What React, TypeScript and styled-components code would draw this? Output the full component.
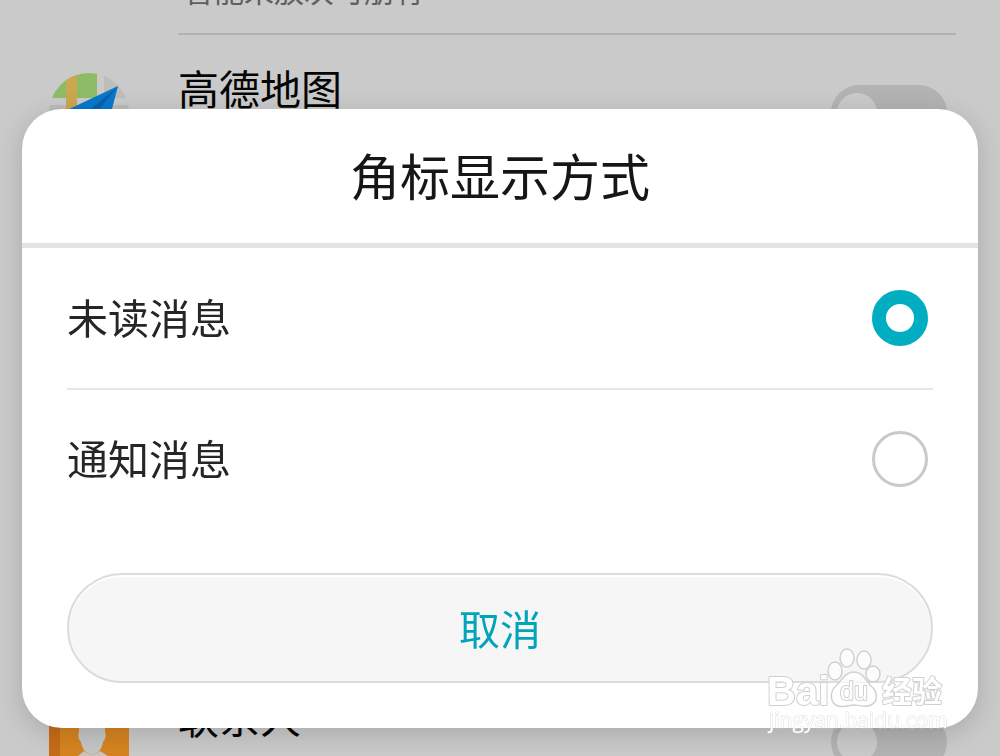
import React, { useState } from "react";
import styled, { createGlobalStyle } from "styled-components";

const GlobalStyle = createGlobalStyle`
  * { box-sizing: border-box; }
  body {
    margin: 0;
    background: #cacaca;
    font-family: "Noto Sans CJK SC", "Noto Sans", sans-serif;
  }
`;

const Page = styled.main`
  display: flex;
  flex-direction: column;
  justify-content: space-between;
  height: 100vh;
  overflow: hidden;
  background: #cacaca;
`;

const Summary = styled.p`
  display: flex;
  align-items: flex-end;
  height: 33px;
  margin: 0 44px 0 184px;
  padding-bottom: 26px;
  font-size: 30px;
  line-height: 36px;
  color: #5f5f5f;
`;

const AppRow = styled.label`
  display: flex;
  align-items: flex-start;
  height: 92px;
  padding: 38px 53px 0 49px;
`;

const AppIcon = styled.svg`
  flex: none;
  width: 80px;
  height: 80px;
  margin-right: 49px;
`;

const AppBody = styled.div`
  flex: 1;
  font-size: 41px;
  line-height: 28px;
  color: #050505;
`;

const Switch = styled.input`
  appearance: none;
  flex: none;
  display: flex;
  align-items: center;
  width: 116px;
  height: 56px;
  margin: 12px 0 0;
  padding: 0 6px;
  border-radius: 28px;
  background: #b3b3b3;

  &::before {
    content: "";
    width: 40px;
    height: 40px;
    border-radius: 50%;
    background: #cacaca;
  }
`;

const List = styled.div`
  flex: none;
`;

const Rule = styled.hr`
  height: 2px;
  margin: 0 44px 0 178px;
  border: 0;
  background: #b2b2b2;
`;

const Dialog = styled.form`
  position: fixed;
  right: 22px;
  bottom: 28px;
  left: 22px;
  border-radius: 40px;
  background: #fff;
  box-shadow: 0 6px 26px rgba(0, 0, 0, 0.16);
`;

const Title = styled.h1`
  margin: 0;
  padding: 28px 0 32px;
  border-bottom: 5px solid #e3e3e3;
  font-size: 50px;
  font-weight: 400;
  line-height: 74px;
  text-align: center;
  color: #161616;
`;

const Options = styled.div`
  padding: 0 45px;
`;

const Option = styled.label`
  display: flex;
  align-items: center;
  justify-content: space-between;
  height: 140px;
  padding-right: 5px;
  font-size: 41px;
  line-height: 60px;
  color: #262626;

  & + & {
    border-top: 2px solid #e6e6e6;
  }
`;

const OptionText = styled.span`
  padding-bottom: 4px;
`;

const Radio = styled.input`
  appearance: none;
  width: 56px;
  height: 56px;
  margin: 0;
  border: 3px solid #c9c9c9;
  border-radius: 50%;
  background: #fff;

  &:checked {
    border: 14px solid #00adc1;
  }
`;

const Actions = styled.div`
  display: flex;
  padding: 45px;
`;

const CancelButton = styled.button`
  flex: 1;
  height: 110px;
  padding: 0 0 2px;
  border: 2px solid #dcdcdc;
  border-radius: 55px;
  background: #f6f6f6;
  box-shadow: inset 0 2px 0 #fff;
  font: inherit;
  font-size: 41px;
  color: #00a5ba;
`;

const Watermark = styled.svg`
  position: fixed;
  right: 50px;
  bottom: 16px;
  width: 190px;
  height: 95px;
  pointer-events: none;
`;

const MapIcon = () => (
  <AppIcon viewBox="0 0 80 80" aria-hidden="true">
    <clipPath id="disc"><circle cx="40" cy="40" r="40" /></clipPath>
    <g clipPath="url(#disc)">
      <path d="M0 0H48V25H0Z" fill="#8cbd66" />
      <path d="M17 0H28V60H17Z" fill="#cda650" />
      <path d="M55 0H80V25H55Z" fill="#bdbdb9" />
      <path d="M0 32H17V80H0ZM28 32H80V80H28Z" fill="#bbbbb7" />
    </g>
    <path d="M69 13L16 38L30 62L58 55Z" fill="#0878cc" />
    <path d="M69 13L40 38L30 62Z" fill="#0562ad" />
  </AppIcon>
);

const ContactsIcon = () => (
  <AppIcon viewBox="0 0 80 80" aria-hidden="true">
    <path d="M0 0H80V80H0Z" fill="#d58420" />
    <path d="M0 0H11V80H0Z" fill="#c56c18" />
    <path d="M22 60L35 49Q43 56 51 49L64 57V80H22Z" fill="#cbc3c0" />
    <path d="M30 18H56V30Q58 36 54 40Q53 47 49 50Q43 55 37 50Q33 47 32 40Q28 36 30 30Z" fill="#c4c5c5" />
  </AppIcon>
);

const Logo = () => (
  <Watermark viewBox="0 0 190 95" aria-label="Baidu 经验">
    <g fill="#fff" fillOpacity="0.7" stroke="#d0d0d0" strokeWidth="1.5">
      <ellipse cx="75" cy="26" rx="7" ry="9" />
      <ellipse cx="87" cy="13" rx="7" ry="9" />
      <ellipse cx="104" cy="15" rx="7" ry="9" />
      <ellipse cx="113" cy="29" rx="7" ry="8" />
      <path d="M94 27C84 27 82 36 76 41C70 46 69 58 78 61C84 63 89 60 94 60C99 60 105 63 111 60C119 56 117 46 112 42C105 36 104 27 94 27Z" />
      <g fillOpacity="1" strokeWidth="2" paintOrder="stroke" strokeLinejoin="round">
        <text x="7" y="60" fontFamily="Liberation Sans" fontSize="40" fontWeight="700">Bai</text>
        <text x="80" y="55" fontFamily="Liberation Sans" fontSize="25">du</text>
        <text x="122" y="57" fontFamily="Noto Sans CJK SC" fontSize="30" fontWeight="700">经验</text>
      </g>
    </g>
    <text x="9" y="83" fontFamily="Open Sans" fontSize="21" fill="#fff" stroke="#d0d0d0" strokeOpacity="0.7" strokeWidth="1" paintOrder="stroke">
      jingyan.baidu.com
    </text>
  </Watermark>
);

const choices = ["未读消息", "通知消息"];

export default function App() {
  const [mode, setMode] = useState(choices[0]);
  return (
    <>
      <GlobalStyle />
      <Page>
        <List>
          <Summary>智能未放次可朋有</Summary>
          <Rule />
          <AppRow>
            <MapIcon />
            <AppBody>高德地图</AppBody>
            <Switch type="checkbox" role="switch" />
          </AppRow>
        </List>
        <AppRow>
          <ContactsIcon />
          <AppBody>联系人</AppBody>
          <Switch type="checkbox" role="switch" />
        </AppRow>
      </Page>
      <Dialog role="dialog" aria-labelledby="dialog-title">
        <Title id="dialog-title">角标显示方式</Title>
        <Options role="radiogroup" aria-labelledby="dialog-title">
          {choices.map((choice) => (
            <Option key={choice}>
              <OptionText>{choice}</OptionText>
              <Radio
                type="radio"
                name="badge-mode"
                checked={mode === choice}
                onChange={() => setMode(choice)}
              />
            </Option>
          ))}
        </Options>
        <Actions>
          <CancelButton type="button">取消</CancelButton>
        </Actions>
      </Dialog>
      <Logo />
    </>
  );
}
